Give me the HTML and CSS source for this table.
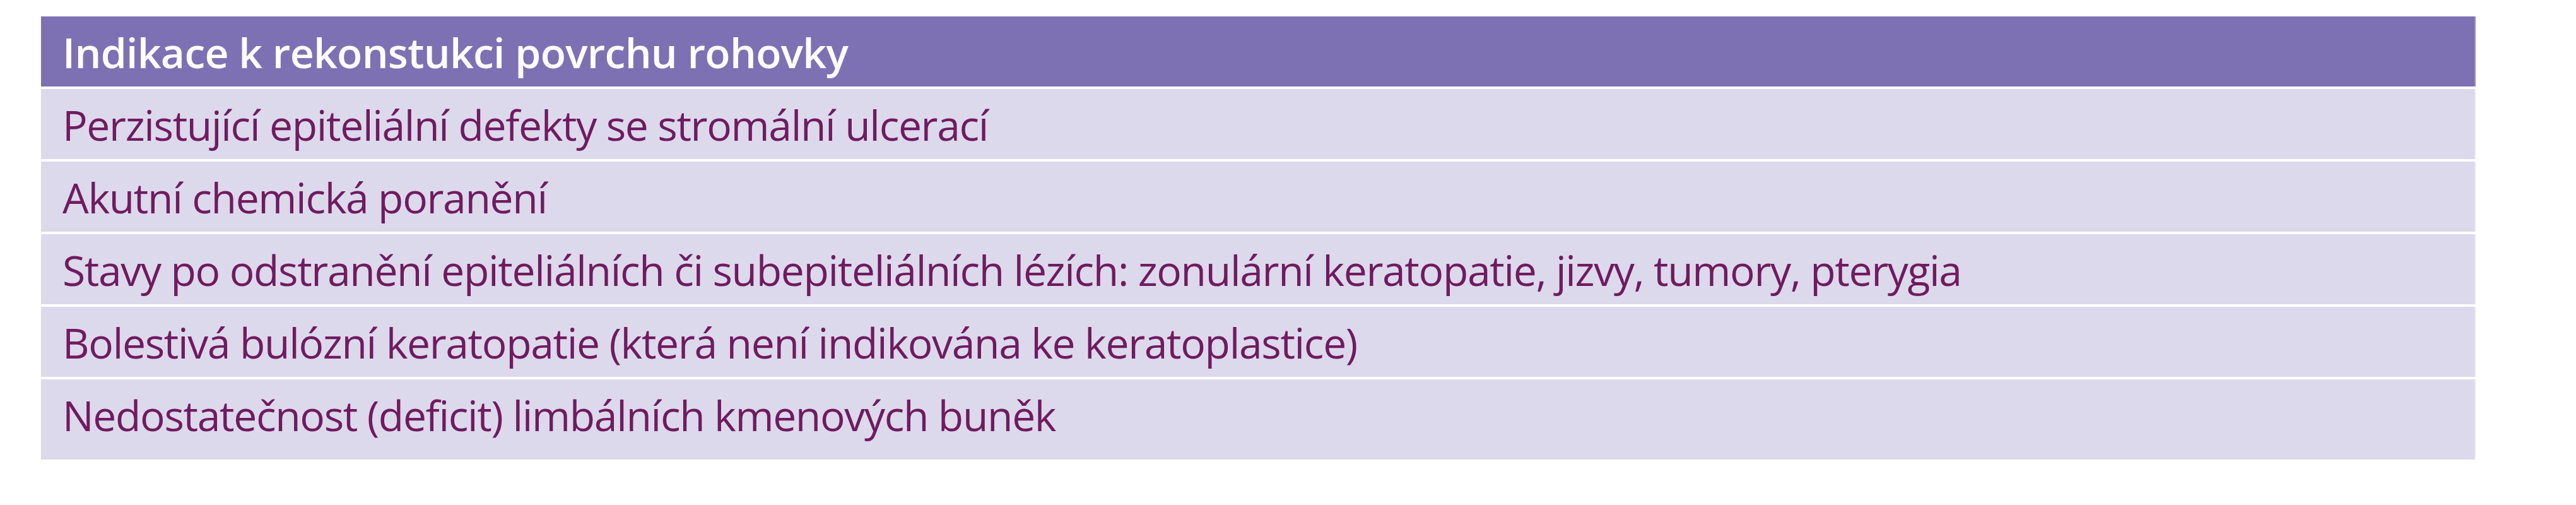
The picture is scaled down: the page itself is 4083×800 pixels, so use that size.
FILE: index.html
```html
<!DOCTYPE html>
<html lang="cs">
<head>
<meta charset="utf-8">
<title>Indikace k rekonstukci povrchu rohovky</title>
<link rel="stylesheet" href="styles.css">
</head>
<body>
<div class="table">
  <div class="row head"><span class="cell">Indikace k rekonstukci povrchu rohovky</span></div>
  <div class="row"><span class="cell">Perzistující epiteliální defekty se stromální ulcerací</span></div>
  <div class="row"><span class="cell">Akutní chemická poranění</span></div>
  <div class="row"><span class="cell">Stavy po odstranění epiteliálních či subepiteliálních lézích: zonulární keratopatie, jizvy, tumory, pterygia</span></div>
  <div class="row"><span class="cell">Bolestivá bulózní keratopatie (která není indikována ke keratoplastice)</span></div>
  <div class="row last"><span class="cell">Nedostatečnost (deficit) limbálních kmenových buněk</span></div>
</div>
</body>
</html>
```
FILE: styles.css
```css
html, body {
  margin: 0;
  padding: 0;
  background: #ffffff;
}

body {
  font-family: "Open Sans", "Lato", "Liberation Sans", sans-serif;
}

.table {
  display: flex;
  flex-direction: column;
  gap: 4px;
  width: 3859px;
  margin: 26px 0 0 65px;
}

.row {
  box-sizing: border-box;
  height: 111px;
  padding: 17px 0 0 34px;
  background: #dcd9ec;
  border-right: 2px solid #e9e7f3;
}

.row.head {
  background: #7e71b3;
  border-right-color: #9a90c4;
}

.row.last {
  height: 127px;
}

.cell {
  display: block;
  font-size: 66px;
  line-height: 1.2;
  letter-spacing: -1.35px;
  color: #701b5f;
  white-space: nowrap;
}

.head .cell {
  color: #ffffff;
  font-weight: 600;
  letter-spacing: -0.7px;
}
```
